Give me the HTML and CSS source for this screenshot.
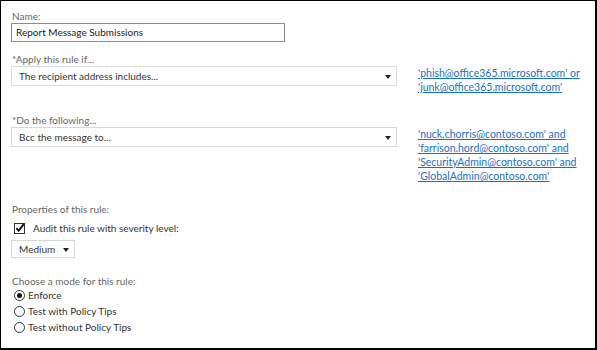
FILE: index.html
```html
<!DOCTYPE html>
<html lang="en">
<head>
    <meta charset="UTF-8">
    <title>Rule</title>
    <link rel="stylesheet" href="styles.css">
</head>
<body>
    <div class="panel">
        <div class="field">
            <div class="label">Name:</div>
            <div class="textbox">Report Message Submissions</div>
        </div>

        <div class="field">
            <div class="label">*Apply this rule if...</div>
            <div class="row">
                <div class="select wide">
                    <span>The recipient address includes...</span>
                    <span class="caret"></span>
                </div>
                <div class="links">
                    <a href="#">'phish@office365.microsoft.com' or</a><br>
                    <a href="#">'junk@office365.microsoft.com'</a>
                </div>
            </div>
        </div>

        <div class="field">
            <div class="label">*Do the following...</div>
            <div class="row">
                <div class="select wide">
                    <span>Bcc the message to...</span>
                    <span class="caret"></span>
                </div>
                <div class="links">
                    <a href="#">'nuck.chorris@contoso.com' and</a><br>
                    <a href="#">'farrison.hord@contoso.com' and</a><br>
                    <a href="#">'SecurityAdmin@contoso.com' and</a><br>
                    <a href="#">'GlobalAdmin@contoso.com'</a>
                </div>
            </div>
        </div>

        <div class="field props">
            <div class="label">Properties of this rule:</div>
            <div class="option">
                <span class="checkbox">
                    <svg width="12" height="12" viewBox="0 0 12 12"><rect x="0.5" y="1.5" width="10" height="10" fill="#fff" stroke="#333"/><path d="M2.4 6.2 L4.6 8.8 L10.2 1.6" fill="none" stroke="#111" stroke-width="1.9"/></svg>
                </span>
                <span class="text">Audit this rule with severity level:</span>
            </div>
            <div class="select small">
                <span>Medium</span>
                <span class="caret"></span>
            </div>
        </div>

        <div class="field mode">
            <div class="label">Choose a mode for this rule:</div>
            <div class="option radio-row">
                <span class="radio checked"></span>
                <span class="text">Enforce</span>
            </div>
            <div class="option radio-row">
                <span class="radio"></span>
                <span class="text">Test with Policy Tips</span>
            </div>
            <div class="option radio-row">
                <span class="radio"></span>
                <span class="text">Test without Policy Tips</span>
            </div>
        </div>
    </div>
</body>
</html>
```

FILE: styles.css
```css
body {
    margin: 0;
    font-family: "Segoe UI", Lato, "Open Sans", sans-serif;
    font-size: 10px;
    color: #333;
    background: #fff;
}
.panel {
    box-sizing: border-box;
    width: 597px;
    height: 350px;
    border-left: 1px solid #000;
    border-top: 1px solid #000;
    border-right: 2px solid #000;
    border-bottom: 2px solid #000;
    padding: 8px 10px 0 10px;
}
.field {
    margin-bottom: 10px;
}
.label {
    color: #666;
    line-height: 14px;
    padding-left: 1px;
}
.textbox {
    box-sizing: border-box;
    width: 274px;
    height: 19px;
    border: 1px solid #8c8c8c;
    padding: 0 4px;
    line-height: 17px;
    color: #222;
}
.row {
    display: flex;
    align-items: flex-start;
    gap: 21px;
    padding-bottom: 9px;
}
.select {
    box-sizing: border-box;
    height: 20px;
    border: 1px solid #d8d8d8;
    background: #fff;
    display: flex;
    align-items: center;
    justify-content: space-between;
    padding: 0 5px 0 7px;
    color: #333;
}
.select.wide {
    width: 386px;
}
.caret {
    width: 0;
    height: 0;
    border-left: 3.5px solid transparent;
    border-right: 3.5px solid transparent;
    border-top: 4px solid #222;
    margin-top: 1px;
}
.links {
    line-height: 14px;
    font-size: 10.5px;
}
.links a {
    color: #1a6fc4;
    text-decoration: underline;
}
.option {
    display: flex;
    align-items: center;
    gap: 7px;
    line-height: 16px;
}
.props .label {
    margin-bottom: 4px;
}
.checkbox {
    display: flex;
    margin-left: 3px;
}
.select.small {
    width: 64px;
    height: 18px;
    margin-top: 4px;
    padding: 0 5px 0 7px;
}
.mode {
    margin-top: 16px;
}
.mode .label {
    margin-bottom: -1px;
}
.radio-row {
    gap: 3px;
}
.radio {
    box-sizing: border-box;
    width: 11px;
    height: 11px;
    border: 1px solid #333;
    border-radius: 50%;
    margin-left: 3px;
    display: flex;
    align-items: center;
    justify-content: center;
}
.radio.checked::after {
    content: "";
    width: 5px;
    height: 5px;
    border-radius: 50%;
    background: #111;
}
```
